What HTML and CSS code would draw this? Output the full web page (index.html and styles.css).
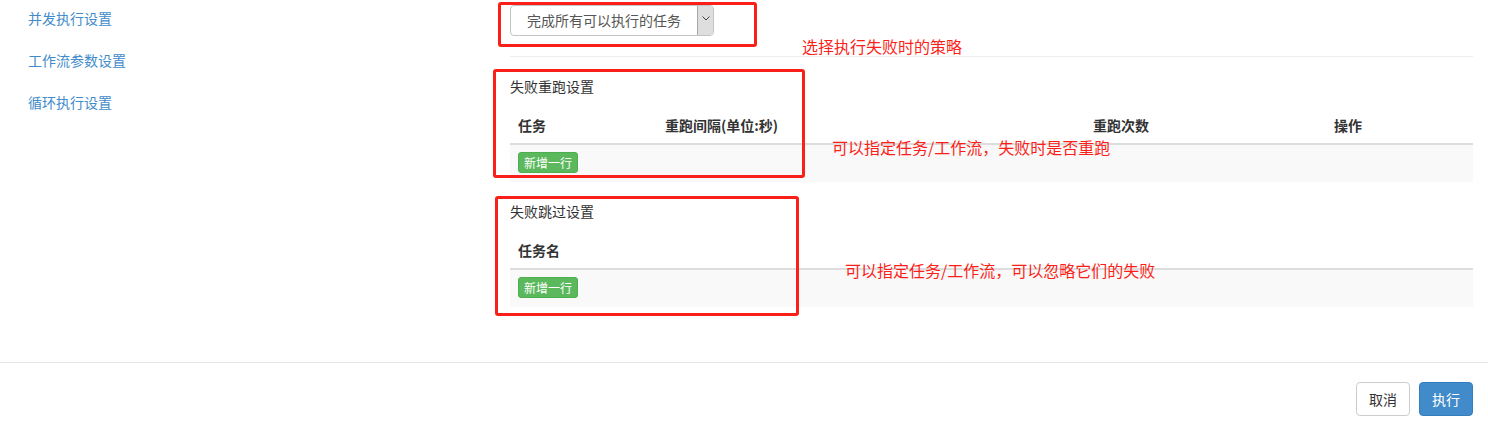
FILE: index.html
```html
<!DOCTYPE html>
<html lang="zh-CN">
<head>
<meta charset="utf-8">
<title>执行设置</title>
<link rel="stylesheet" href="styles.css">
</head>
<body>
<div class="page">
  <div class="content">
    <nav class="sidebar">
      <a class="side-link" href="#">并发执行设置</a>
      <a class="side-link" href="#">工作流参数设置</a>
      <a class="side-link" href="#">循环执行设置</a>
    </nav>
    <main class="main">
      <div class="select">
        <span class="select-text">完成所有可以执行的任务</span>
        <span class="select-arrow">
          <svg width="8" height="5" viewBox="0 0 8 5"><path d="M0.5 0.5 L4 4 L7.5 0.5" fill="none" stroke="#444" stroke-width="1"/></svg>
        </span>
      </div>
      <div class="divider"></div>

      <section class="block">
        <div class="block-title">失败重跑设置</div>
        <table class="grid">
          <thead>
            <tr>
              <th class="c1">任务</th>
              <th class="c2">重跑间隔(单位:秒)</th>
              <th class="c3">重跑次数</th>
              <th class="c4">操作</th>
            </tr>
          </thead>
          <tbody>
            <tr><td colspan="4"><button class="btn-add">新增一行</button></td></tr>
          </tbody>
        </table>
      </section>

      <section class="block block-second">
        <div class="block-title">失败跳过设置</div>
        <table class="grid">
          <thead>
            <tr><th>任务名</th></tr>
          </thead>
          <tbody>
            <tr><td><button class="btn-add">新增一行</button></td></tr>
          </tbody>
        </table>
      </section>
    </main>
  </div>
  <footer class="footer">
    <button class="btn btn-default">取消</button>
    <button class="btn btn-primary">执行</button>
  </footer>

  <div class="mark mark-1"></div>
  <div class="mark mark-2"></div>
  <div class="mark mark-3"></div>
  <div class="note note-1">选择执行失败时的策略</div>
  <div class="note note-2">可以指定任务/工作流，失败时是否重跑</div>
  <div class="note note-3">可以指定任务/工作流，可以忽略它们的失败</div>
</div>
</body>
</html>
```
FILE: styles.css
```css
* { box-sizing: border-box; }
body {
  margin: 0;
  background: #fff;
  font-family: "Noto Sans CJK SC", "Microsoft YaHei", sans-serif;
  font-size: 14px;
  color: #333;
}
.page {
  position: relative;
  width: 1488px;
  height: 434px;
}
.content {
  display: flex;
  height: 362px;
}
.sidebar {
  width: 510px;
  padding: 8px 0 0 28px;
  display: flex;
  flex-direction: column;
  gap: 22px;
}
.side-link {
  color: #428bca;
  text-decoration: none;
  line-height: 20px;
  font-size: 14px;
}
.main {
  width: 963px;
  padding-top: 5px;
}
.select {
  display: flex;
  width: 204px;
  height: 31px;
  border: 1px solid #c4c4c4;
  border-radius: 4px;
  overflow: hidden;
  background: #fff;
}
.select-text {
  flex: 1;
  padding-left: 16px;
  line-height: 29px;
  color: #555;
  font-size: 14px;
}
.select-arrow {
  width: 16px;
  background: #dedede;
  border-left: 1px solid #a8a8a8;
  display: flex;
  align-items: flex-start;
  justify-content: center;
  padding-top: 10px;
}
.divider {
  margin-top: 20px;
  height: 1px;
  background: #eee;
}
.block { margin-top: 19px; }
.block-second { margin-top: 19px; }
.block-title {
  line-height: 20px;
  color: #333;
}
.grid {
  margin-top: 11px;
  width: 963px;
  border-collapse: collapse;
}
.grid th {
  text-align: left;
  padding: 8px;
  line-height: 20px;
  font-weight: bold;
  color: #333;
  border-bottom: 2px solid #ddd;
}
.grid .c1 { width: 147px; }
.grid .c2 { width: 428px; }
.grid .c3 { width: 241px; }
.grid .c4 { width: 147px; }
.grid td {
  padding: 7px 8px 9px;
  background: #f9f9f9;
  line-height: 20px;
}
.btn-add {
  display: block;
  font-family: inherit;
  font-size: 12px;
  line-height: 18px;
  height: 21px;
  padding: 0 5px;
  color: #fff;
  background: #5cb85c;
  border: 1px solid #4cae4c;
  border-radius: 3px;
}
.footer {
  border-top: 1px solid #e5e5e5;
  padding: 19px 15px 0 0;
  display: flex;
  justify-content: flex-end;
  gap: 9px;
}
.btn {
  font-family: inherit;
  font-size: 14px;
  height: 34px;
  line-height: 20px;
  padding: 6px 12px;
  border-radius: 4px;
  border: 1px solid #ccc;
}
.btn-default { background: #fff; color: #333; }
.btn-primary { background: #428bca; border-color: #357ebd; color: #fff; }

.mark {
  position: absolute;
  border: 3px solid #fb1f1a;
  border-radius: 3px;
}
.mark-1 { left: 498px; top: 2px; width: 259px; height: 45px; }
.mark-2 { left: 493px; top: 69px; width: 312px; height: 109px; }
.mark-3 { left: 495px; top: 196px; width: 304px; height: 120px; }
.note {
  position: absolute;
  color: #fb1f1a;
  font-size: 16px;
  line-height: 20px;
  white-space: nowrap;
}
.note-1 { left: 802px; top: 36px; }
.note-2 { left: 832px; top: 137px; }
.note-3 { left: 845px; top: 260px; }
```
